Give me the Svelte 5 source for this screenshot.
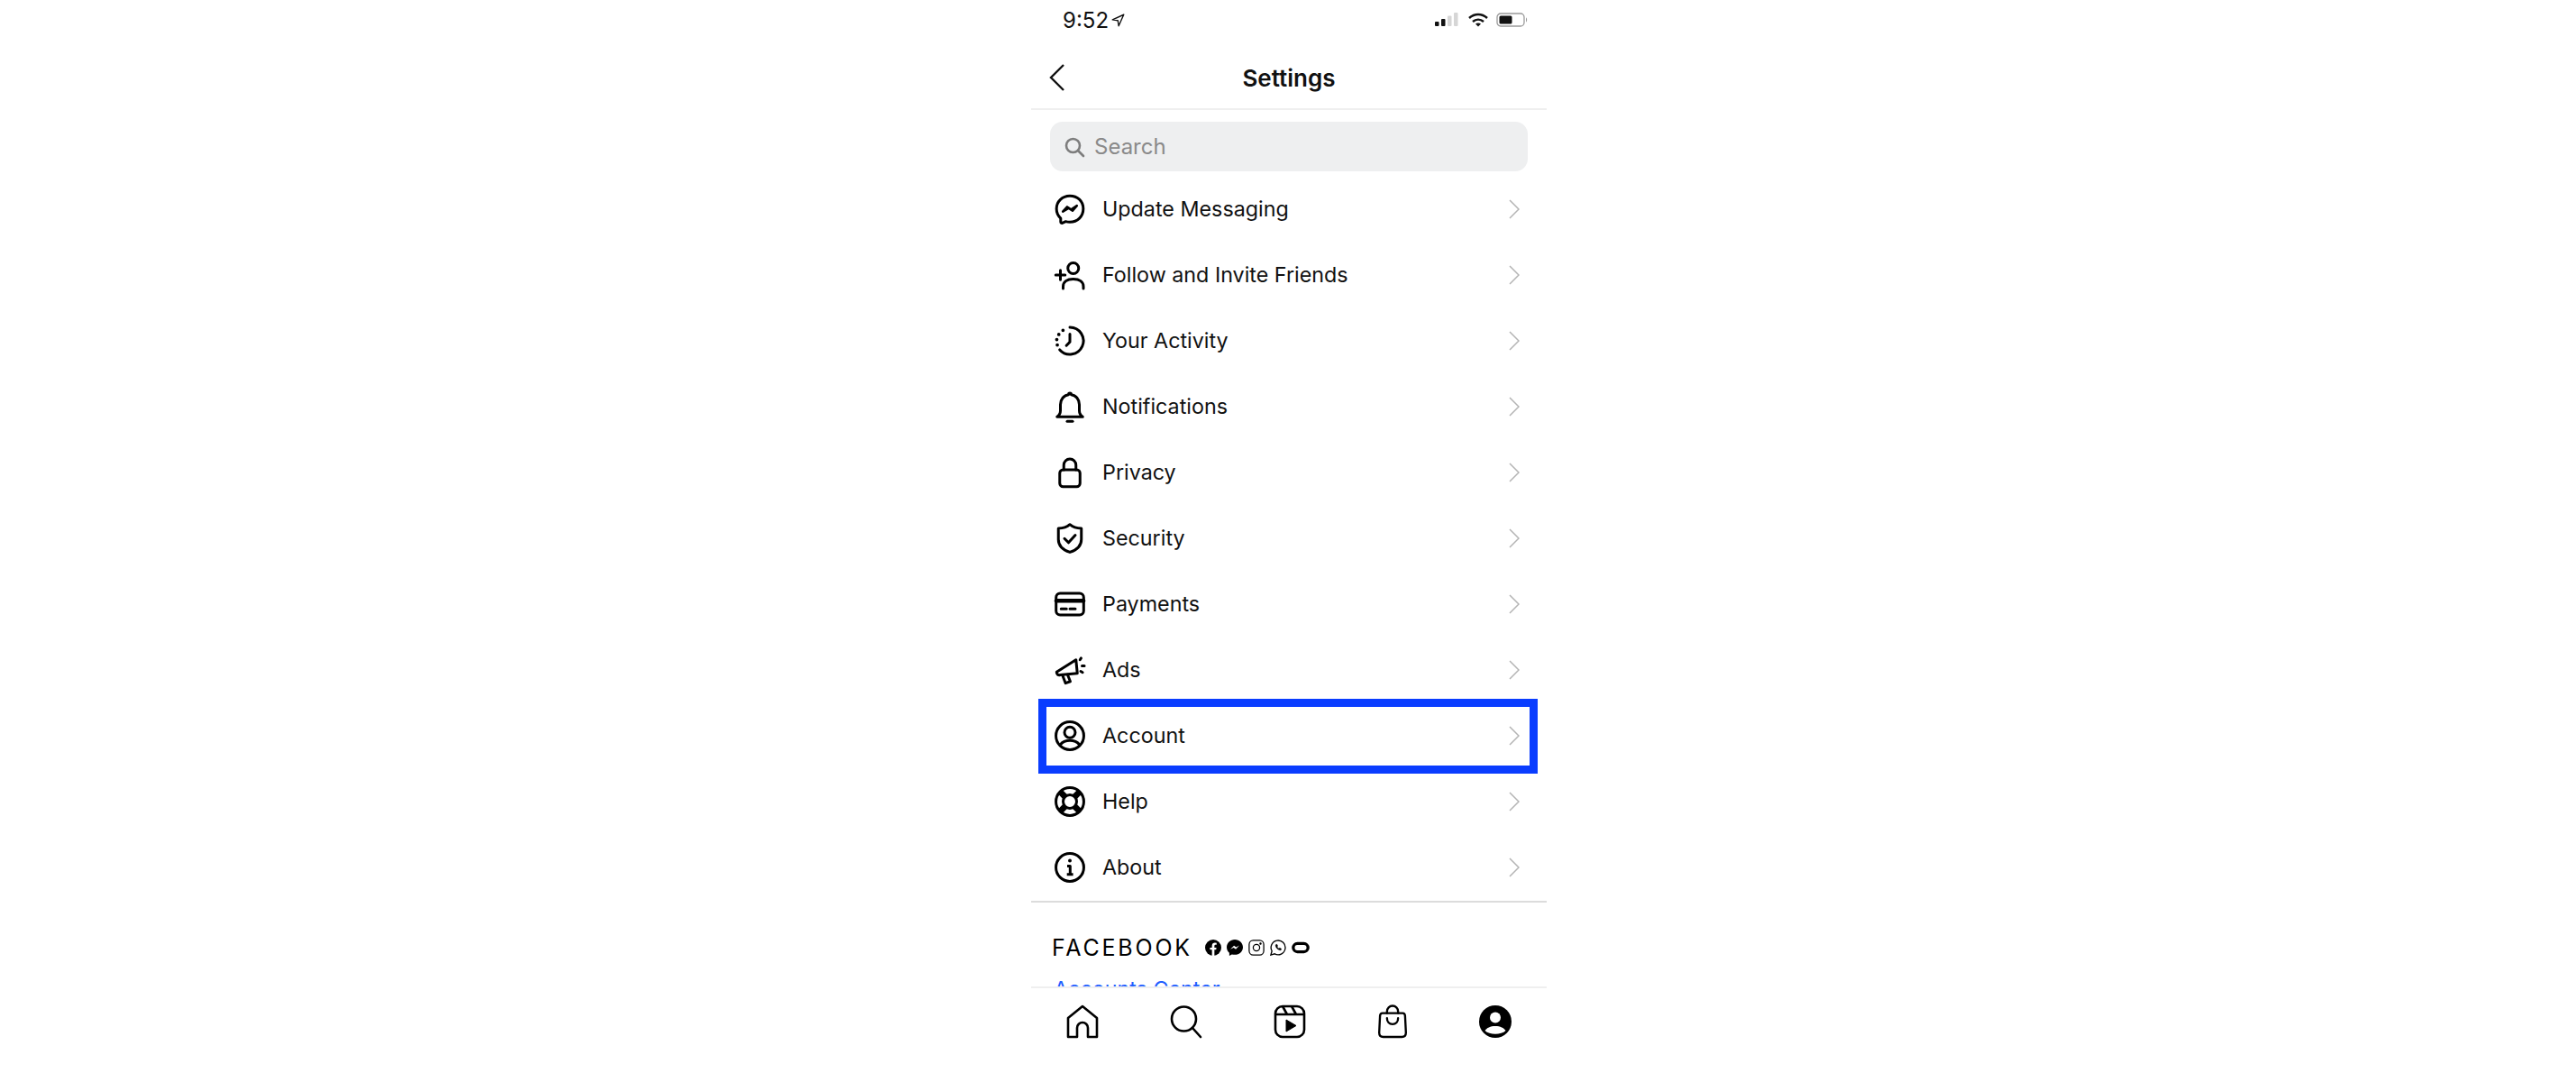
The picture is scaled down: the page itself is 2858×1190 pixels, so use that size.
<script lang="ts">
	const rows = [
		{ label: 'Update Messaging', icon: messaging },
		{ label: 'Follow and Invite Friends', icon: follow },
		{ label: 'Your Activity', icon: activity },
		{ label: 'Notifications', icon: bell },
		{ label: 'Privacy', icon: lock },
		{ label: 'Security', icon: shield },
		{ label: 'Payments', icon: card },
		{ label: 'Ads', icon: megaphone },
		{ label: 'Account', icon: account, marked: true },
		{ label: 'Help', icon: help },
		{ label: 'About', icon: about }
	];
</script>

{#snippet messaging()}
	<path d="M12 2.2c-5.6 0-9.9 4.1-9.9 9.5 0 2.9 1.2 5.3 3.1 7v2.7c0 .7.6 1 1.200.8l2.500-1.100c1 .3 2 .4 3.100.4 5.600 0 9.900-4.100 9.900-9.800S17.600 2.200 12 2.200z" />
	<path d="M6.800 13.700l3.200-3.400 2.700 2 4.500-2.900-3.200 3.700-2.700-2z" stroke-width="1.700" />
{/snippet}

{#snippet follow()}
	<circle cx="14.500" cy="7" r="4" />
	<path d="M7 22v-1.500c0-3.500 2.800-5.500 7.500-5.500s7.500 2 7.500 5.500V22" />
	<path d="M1.500 12h7M5 8.500v7" />
{/snippet}

{#snippet activity()}
	<path d="M12 2a10 10 0 1 1-7.500 16.600" />
	<path d="M12 7v5.800l-2.600 2.700" />
	<path d="M6.900 4.200h.01M3.800 7.300h.01M2.300 11h.01M2.700 15h.01" stroke-width="2.500" />
{/snippet}

{#snippet bell()}
	<path d="M2.500 19.500h19c-1.500-1-2.500-2.400-2.500-4.500v-4.500c0-4-2.600-7-6-7.400V3a1 1 0 0 0-2 0v.1c-3.400.4-6 3.400-6 7.400V15c0 2.100-1 3.500-2.500 4.500z" />
	<path d="M10 22.800h4" />
{/snippet}

{#snippet lock()}
	<rect x="4.500" y="10" width="15" height="12.500" rx="2.500" />
	<path d="M7.500 10V6.500a4.500 4.500 0 0 1 9 0V10" />
{/snippet}

{#snippet shield()}
	<path d="M12 1.800c-2.200 1.900-5 2.800-8.500 2.900v8.100c0 4.500 3.500 7.800 8.500 9.500 5-1.700 8.500-5 8.500-9.500V4.700c-3.500-.1-6.300-1-8.500-2.900z" />
	<path d="M8 12.200l3 3 5-5.500" />
{/snippet}

{#snippet card()}
	<rect x="1.800" y="4" width="20.400" height="16" rx="3" />
	<path d="M2 9.500h20" stroke-width="3" />
	<path d="M5.500 15.500h4M12 15.500h4" />
{/snippet}

{#snippet megaphone()}
	<path d="M2.200 13.500L16.500 4.500l1 10-12.700 1.200a2 2 0 0 1-2.600-2.200z" />
	<path d="M6.500 15.800l2.300 6 3.500-1.300-2-5" />
	<path d="M19.500 4.500l.8-1.200M21 9h1.700M20 13l1.400.8" stroke-width="2" />
{/snippet}

{#snippet account()}
	<circle cx="12" cy="12" r="10.300" />
	<circle cx="12" cy="9.500" r="4" />
	<path d="M5 18.500c1.500-2 4-3 7-3s5.500 1 7 3" />
{/snippet}

{#snippet help()}
	<circle cx="12" cy="12" r="10.300" />
	<circle cx="12" cy="12" r="5" />
	<path d="M4.800 4.800l3.700 3.700M19.200 4.800l-3.700 3.700M4.800 19.200l3.700-3.700M19.200 19.200l-3.700-3.700" stroke-width="4.500" stroke-linecap="butt" />
{/snippet}

{#snippet about()}
	<circle cx="12" cy="12" r="10.300" />
	<circle cx="12" cy="7" r="1.300" fill="currentColor" stroke="none" />
	<path d="M10 11h2.200v6M9.800 17.200h4.600" stroke-linecap="butt" />
{/snippet}

<div class="page">
	<div class="phone">
		<div class="status">
			<div class="clock">
				<span>9:52</span>
				<svg viewBox="0 0 12 12" width="15" height="15" fill="none" stroke="#111" stroke-width="1.100" stroke-linejoin="round">
					<path d="M11 1L1 5.500l4.800.7.700 4.800z" />
				</svg>
			</div>
			<div class="indicators">
				<svg viewBox="0 0 28 16" width="28" height="16">
					<rect x="0" y="10" width="4.500" height="5" rx="1" fill="#111" />
					<rect x="7" y="7" width="4.500" height="8" rx="1" fill="#111" />
					<rect x="14" y="3.500" width="4.500" height="11.500" rx="1" fill="#d6d6d6" />
					<rect x="21" y="0" width="4.500" height="15" rx="1" fill="#d6d6d6" />
				</svg>
				<svg viewBox="0 0 24 16" width="24" height="16" fill="none" stroke="#111" stroke-width="2.500">
					<path d="M2 6c6-5.300 14-5.300 20 0" />
					<path d="M6 10c3.600-3.100 8.400-3.100 12 0" />
					<path d="M12 15.500l-3-3c1.800-1.300 4.200-1.300 6 0z" fill="#111" stroke="none" />
				</svg>
				<svg viewBox="0 0 36 16" width="36" height="16">
					<rect x="1" y="1" width="30" height="14" rx="4" fill="none" stroke="#9a9a9a" stroke-width="1.300" />
					<rect x="3.500" y="3.500" width="14" height="9" rx="1.500" fill="#111" />
					<path d="M33 5.500c1.500.5 1.500 4.500 0 5z" fill="#9a9a9a" />
				</svg>
			</div>
		</div>

		<header class="topbar">
			<svg class="back" viewBox="0 0 18 32" width="18" height="32" fill="none" stroke="#111" stroke-width="2.400">
				<path d="M16 2L2 16l14 14" />
			</svg>
			<h1>Settings</h1>
		</header>

		<div class="search">
			<svg viewBox="0 0 24 24" width="24" height="24" fill="none" stroke="#7d7d7d" stroke-width="2.600" stroke-linecap="round">
				<circle cx="10.500" cy="10.500" r="7.500" />
				<path d="M16 16l6 6" />
			</svg>
			<span>Search</span>
		</div>

		<ul class="menu">
			{#each rows as row}
				<li class="row">
					<svg class="icon" viewBox="0 0 24 24" fill="none" stroke="currentColor" stroke-width="2" stroke-linecap="round" stroke-linejoin="round">
						{@render row.icon()}
					</svg>
					<span class="label">{row.label}</span>
					<svg class="chevron" viewBox="0 0 12 22" fill="none" stroke="#b4b4b4" stroke-width="1.500">
						<path d="M1 1l10 10L1 21" />
					</svg>
					{#if row.marked}
						<div class="marker"></div>
					{/if}
				</li>
			{/each}
		</ul>

		<div class="more">
			<div class="brand">
				<span class="wordmark">FACEBOOK</span>
				<div class="apps">
					<svg viewBox="0 0 20 20" width="18" height="18">
						<circle cx="10" cy="10" r="10" fill="#000" />
						<path d="M8.500 20v-7.500H6V10h2.500V7.800c0-2.500 1.500-3.800 3.700-3.800l2 .2v2.300h-1.200c-1.200 0-1.500.7-1.500 1.500V10H14l-.4 2.500h-2.100V20z" fill="#fff" />
					</svg>
					<svg viewBox="0 0 20 20" width="18" height="18">
						<path d="M10 0C4.400 0 0 4.100 0 9.500c0 2.900 1.200 5.300 3.200 7V20l3.200-1.800c1.100.3 2.300.5 3.600.5 5.600 0 10-4.100 10-9.300S15.600 0 10 0z" fill="#000" />
						<path d="M4.500 12L9 7.500l2.600 2 4-2.300-4.400 4.700-2.700-2z" fill="#fff" />
					</svg>
					<svg viewBox="0 0 20 20" width="18" height="18" fill="none" stroke="#000" stroke-width="1.400">
						<rect x="1" y="1" width="18" height="18" rx="5" />
						<circle cx="10" cy="10" r="4" />
						<circle cx="15" cy="5" r=".7" fill="#000" />
					</svg>
					<svg viewBox="0 0 20 20" width="18" height="18" fill="none" stroke="#000" stroke-width="1.500">
						<path d="M1 19l1.400-4.800A8.800 8.800 0 1 1 5.800 17.600z" />
						<path d="M7 6.500c-.8 3 3.500 7.300 6.500 6.500l.5-1.700-2-1-1 .8c-1-.5-1.800-1.300-2.200-2.200l.8-1-1-2z" fill="#000" stroke-width=".5" />
					</svg>
					<svg viewBox="0 0 22 14" width="20" height="14" fill="none" stroke="#000" stroke-width="3.600">
						<rect x="2" y="2" width="18" height="10" rx="5" />
					</svg>
				</div>
			</div>
			<a class="link" href="#accounts">Accounts Center</a>
		</div>

		<nav class="tabs">
			<svg viewBox="0 0 36 38" width="36" height="38" fill="none" stroke="#000" stroke-width="2.600" stroke-linejoin="round">
				<path d="M2 36V15L18 2l16 13v21H24V26a6 6 0 0 0-12 0v10z" />
			</svg>
			<svg viewBox="0 0 36 38" width="36" height="38" fill="none" stroke="#000" stroke-width="2.600" stroke-linecap="round">
				<circle cx="15.500" cy="16" r="13.500" />
				<path d="M25 26l9 10" />
			</svg>
			<svg viewBox="0 0 36 38" width="36" height="38" fill="none" stroke="#000" stroke-width="2.600" stroke-linejoin="round">
				<rect x="2" y="2" width="32" height="34" rx="8" />
				<path d="M2 11h32M10 2l5 9M20 2l5 9" />
				<path d="M14 17l11 6.500L14 30z" fill="#000" stroke-width="1" />
			</svg>
			<svg viewBox="0 0 36 40" width="34" height="40" fill="none" stroke="#000" stroke-width="2.500" stroke-linecap="round" stroke-linejoin="round">
				<path d="M6 10h24c2 0 2.500 1 2.700 3l1 20c0 3-1.500 5-4.700 5H7c-3.200 0-4.700-2-4.700-5l1-20C3.500 11 4 10 6 10z" />
				<path d="M11.500 10V8a6.500 6.500 0 0 1 13 0v2M11.500 16c0 4 2.500 7 6.500 7s6.500-3 6.500-7" />
			</svg>
			<svg viewBox="0 0 36 38" width="36" height="38">
				<circle cx="18" cy="19" r="18" fill="#000" />
				<circle cx="18" cy="14.500" r="6" fill="#fff" />
				<path d="M6.500 29c2-3 6-5 11.500-5s9.500 2 11.500 5c-2.500 2.500-7 3.800-11.500 3.800S9 31.500 6.500 29z" fill="#fff" />
			</svg>
		</nav>
	</div>
</div>

<style>
	:global(body) {
		background: #fff;
	}

	.page {
		display: flex;
		justify-content: center;
		height: 1190px;
		overflow: hidden;
		padding-left: 2px;
		font-family: Inter, "Liberation Sans", sans-serif;
		color: #111;
	}

	.phone {
		width: 572px;
		display: flex;
		flex-direction: column;
	}

	.status {
		height: 44px;
		padding: 0 20px 0 35px;
		display: flex;
		align-items: center;
		justify-content: space-between;
	}

	.clock {
		display: flex;
		align-items: center;
		gap: 3px;
		font-size: 24px;
	}

	.indicators {
		display: flex;
		align-items: center;
		gap: 8px;
	}

	.topbar {
		height: 76px;
		display: flex;
		align-items: center;
		justify-content: center;
		border-bottom: 2px solid #efefef;
		position: relative;
	}

	.back {
		position: absolute;
		left: 20px;
		top: 26px;
	}

	h1 {
		margin: 8px 0 0;
		font-size: 26px;
		font-weight: 600;
	}

	.search {
		margin: 13px 21px 0 21px;
		height: 55px;
		background: #eeeff0;
		border-radius: 14px;
		padding: 0 15px;
		display: flex;
		align-items: center;
		gap: 10px;
		font-size: 24px;
		color: #8a8a8a;
	}

	.menu {
		list-style: none;
		margin: 5px 0 0;
		padding: 0;
	}

	.row {
		height: 73px;
		display: flex;
		align-items: center;
		padding: 0 30px 0 25px;
		position: relative;
	}

	.icon {
		width: 36px;
		height: 36px;
		flex: none;
		color: #000;
	}

	.label {
		flex: 1;
		margin-left: 18px;
		font-size: 23.300px;
	}

	.chevron {
		width: 12px;
		height: 22px;
		flex: none;
	}

	.marker {
		position: absolute;
		inset: -4px 10px -6px 8px;
		border: 9px solid #0a3dff;
	}

	.more {
		height: 95px;
		margin-top: 1px;
		border-top: 2px solid #dcdcdc;
		padding: 37px 22px 0 23px;
		overflow: hidden;
		box-sizing: border-box;
	}

	.brand {
		display: flex;
		align-items: center;
		gap: 14px;
	}

	.wordmark {
		font-size: 25px;
		font-weight: 400;
		letter-spacing: 2.800px;
		line-height: 26px;
		color: #000;
	}

	.apps {
		display: flex;
		align-items: center;
		gap: 6px;
	}

	.link {
		display: block;
		margin: 18px 0 0 2px;
		font-size: 23.300px;
		color: #1f5eff;
		text-decoration: none;
	}

	.tabs {
		height: 74px;
		border-top: 2px solid #efefef;
		display: flex;
		align-items: center;
		justify-content: space-between;
		padding: 0 39px 4px;
	}
</style>
